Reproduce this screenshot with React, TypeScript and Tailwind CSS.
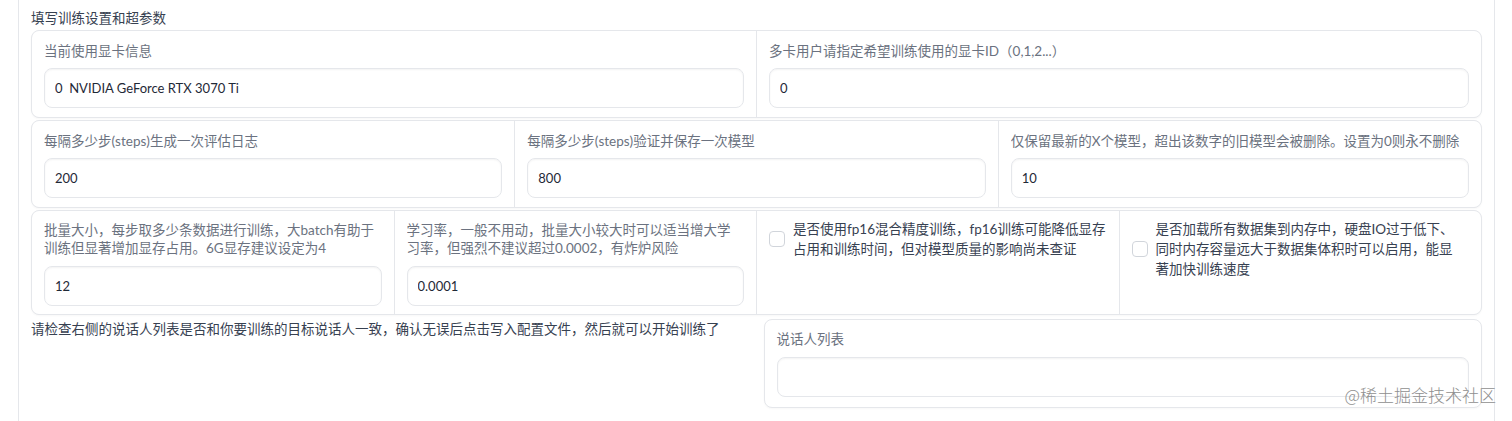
import type { ReactNode } from "react";

const inputCls =
  "h-10 w-full rounded-lg border border-[#e5e7eb] bg-white px-[10px] text-[13px] text-[#1f2937] shadow-[inset_0_1px_2px_rgba(0,0,0,0.05)] outline-none";

function Row({ children }: { children: ReactNode }) {
  return (
    <div className="flex gap-px overflow-hidden rounded-lg border border-[#e5e7eb] bg-[#e5e7eb] shadow-[0_1px_2px_rgba(0,0,0,0.03)]">
      {children}
    </div>
  );
}

function Field({
  label,
  value,
  tall = false,
}: {
  label: string[];
  value: string;
  tall?: boolean;
}) {
  return (
    <div
      className={`min-w-0 flex-1 basis-0 bg-white px-3 ${
        tall ? "pt-[10px] pb-[8px]" : "pt-[10px] pb-[9px]"
      }`}
    >
      <div
        className={`overflow-hidden whitespace-nowrap text-[13.5px] text-[#6b7280] ${
          tall ? "mb-[9px] leading-[18px]" : "mb-[7px] leading-5"
        }`}
      >
        {label.map((l) => (
          <div key={l}>{l}</div>
        ))}
      </div>
      <input className={inputCls} defaultValue={value} />
    </div>
  );
}

function CheckField({ lines }: { lines: string[] }) {
  return (
    <div className="min-w-0 flex-1 basis-0 bg-white px-3 pt-[8px]">
      <label className="flex cursor-pointer items-center gap-2">
        <input
          type="checkbox"
          className="h-4 w-4 shrink-0 appearance-none rounded border border-[#d1d5db] bg-white"
        />
        <span className="whitespace-nowrap text-[13.5px] leading-5 text-[#374151]">
          {lines.map((l) => (
            <span key={l} className="block">
              {l}
            </span>
          ))}
        </span>
      </label>
    </div>
  );
}

export default function App() {
  return (
    <div className="relative min-h-screen bg-white font-[Lato,'Noto_Sans_CJK_SC',sans-serif]">
      <div className="ml-[18px] min-h-screen w-[1477px] border-x border-[#e5e7eb] px-3 pt-2">
        <div className="mb-[2px] text-[13.5px] leading-5 text-[#374151]">
          填写训练设置和超参数
        </div>

        <div className="flex flex-col gap-[2px]">
          <Row>
            <Field label={["当前使用显卡信息"]} value="0  NVIDIA GeForce RTX 3070 Ti" />
            <Field label={["多卡用户请指定希望训练使用的显卡ID（0,1,2...）"]} value="0" />
          </Row>

          <Row>
            <Field label={["每隔多少步(steps)生成一次评估日志"]} value="200" />
            <Field label={["每隔多少步(steps)验证并保存一次模型"]} value="800" />
            <Field
              label={["仅保留最新的X个模型，超出该数字的旧模型会被删除。设置为0则永不删除"]}
              value="10"
            />
          </Row>

          <Row>
            <Field
              tall
              label={[
                "批量大小，每步取多少条数据进行训练，大batch有助于",
                "训练但显著增加显存占用。6G显存建议设定为4",
              ]}
              value="12"
            />
            <Field
              tall
              label={[
                "学习率，一般不用动，批量大小较大时可以适当增大学",
                "习率，但强烈不建议超过0.0002，有炸炉风险",
              ]}
              value="0.0001"
            />
            <CheckField
              lines={[
                "是否使用fp16混合精度训练，fp16训练可能降低显存",
                "占用和训练时间，但对模型质量的影响尚未查证",
              ]}
            />
            <CheckField
              lines={[
                "是否加载所有数据集到内存中，硬盘IO过于低下、",
                "同时内存容量远大于数据集体积时可以启用，能显",
                "著加快训练速度",
              ]}
            />
          </Row>
        </div>

        <div className="mt-1 grid grid-cols-2 gap-[14px]">
          <div className="whitespace-nowrap text-[13.5px] leading-5 text-[#374151]">
            请检查右侧的说话人列表是否和你要训练的目标说话人一致，确认无误后点击写入配置文件，然后就可以开始训练了
          </div>
          <div className="rounded-lg border border-[#e5e7eb] bg-white px-3 pt-[9px] pb-[10px] shadow-[0_1px_2px_rgba(0,0,0,0.03)]">
            <div className="mb-2 text-[13.5px] leading-5 text-[#6b7280]">说话人列表</div>
            <input className={inputCls} defaultValue="" />
          </div>
        </div>
      </div>

      <div className="pointer-events-none absolute top-[384px] right-[16px] font-['Noto_Sans_CJK_SC',sans-serif] text-[17px] leading-[22px] font-light text-[#8f8f8f]">
        @稀土掘金技术社区
      </div>
    </div>
  );
}
